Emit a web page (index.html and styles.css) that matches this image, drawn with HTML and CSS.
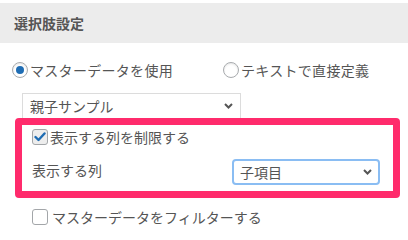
FILE: index.html
```html
<!DOCTYPE html>
<html lang="ja">
<head>
<meta charset="utf-8">
<link rel="stylesheet" href="styles.css">
</head>
<body>
<div class="panel">
  <div class="header">選択肢設定</div>
  <div class="radios">
    <label class="radio-item"><span class="radio checked"></span><span>マスターデータを使用</span></label>
    <label class="radio-item second"><span class="radio"></span><span>テキストで直接定義</span></label>
  </div>
  <div class="select master">
    <span>親子サンプル</span>
    <svg class="chev" width="9" height="6" viewBox="0 0 9 6"><path d="M1 1 L4.5 4.5 L8 1" fill="none" stroke="#555" stroke-width="2"/></svg>
  </div>
  <div class="highlight">
    <label class="check-item"><span class="checkbox checked"><svg width="12" height="10" viewBox="0 0 12 10"><path d="M1.5 5 L4.5 8 L10.5 1.5" fill="none" stroke="#1e6cb3" stroke-width="2.4" stroke-linecap="round" stroke-linejoin="round"/></svg></span><span>表示する列を制限する</span></label>
    <div class="col-row">
      <span class="col-label">表示する列</span>
      <div class="select child">
        <span>子項目</span>
        <svg class="chev" width="9" height="6" viewBox="0 0 9 6"><path d="M1 1 L4.5 4.5 L8 1" fill="none" stroke="#555" stroke-width="2"/></svg>
      </div>
    </div>
  </div>
  <label class="check-item outer"><span class="checkbox"></span><span>マスターデータをフィルターする</span></label>
</div>
</body>
</html>
```
FILE: styles.css
```css
html, body {
  margin: 0;
  padding: 0;
  background: #fff;
}
body {
  font-family: "Noto Sans CJK JP", "Noto Sans", sans-serif;
  font-size: 14px;
  color: #555;
}
.panel {
  width: 408px;
  height: 230px;
  overflow: hidden;
}
.header {
  margin-top: 3px;
  height: 40px;
  line-height: 40px;
  background: #ececec;
  padding-left: 14px;
  font-weight: bold;
  color: #555;
}
.radios {
  display: flex;
  align-items: center;
  margin-top: 19px;
  padding-left: 12px;
  height: 16px;
}
.radio-item {
  display: flex;
  align-items: center;
  gap: 2px;
  line-height: 16px;
  letter-spacing: 0.3px;
}
.radio-item.second {
  margin-left: 50px;
}
.radio {
  box-sizing: border-box;
  width: 16px;
  height: 16px;
  border-radius: 50%;
  border: 1px solid #a8abae;
  box-shadow: inset 0 1px 2px rgba(0,0,0,0.1);
  display: flex;
  align-items: center;
  justify-content: center;
  background: #fff;
}
.radio.checked::after {
  content: "";
  width: 8px;
  height: 8px;
  border-radius: 50%;
  background: #1f6db4;
}
.select {
  box-sizing: border-box;
  display: flex;
  align-items: center;
  justify-content: space-between;
  background: #fff;
}
.select.master {
  margin-top: 15px;
  margin-left: 22px;
  width: 219px;
  height: 26px;
  border: 1px solid #dcdcdc;
  padding: 0 7px 0 7px;
}
.highlight {
  box-sizing: border-box;
  margin-top: -1px;
  margin-left: 15px;
  width: 385px;
  height: 80px;
  border: 7px solid #ff2b6c;
  border-radius: 4px;
  padding: 4px 13px 0 10px;
  position: relative;
  background: #fff;
}
.check-item {
  display: flex;
  align-items: center;
  gap: 2px;
  line-height: 16px;
  height: 16px;
}
.checkbox {
  box-sizing: border-box;
  width: 16px;
  height: 16px;
  border: 1px solid #a3a6a9;
  border-radius: 3px;
  background: #fff;
  display: flex;
  align-items: center;
  justify-content: center;
}
.checkbox.checked {
  background: #ededed;
}
.col-row {
  display: flex;
  align-items: center;
  justify-content: space-between;
  margin-top: 14px;
}
.col-label {
  margin-top: -4px;
}
.select.child {
  width: 148px;
  height: 26px;
  border: 2px solid #8abdf3;
  border-radius: 4px;
  padding: 0 6px 0 6px;
}
.check-item.outer {
  margin-top: 11px;
  margin-left: 32px;
  gap: 4px;
}
.chev {
  display: block;
}
```
